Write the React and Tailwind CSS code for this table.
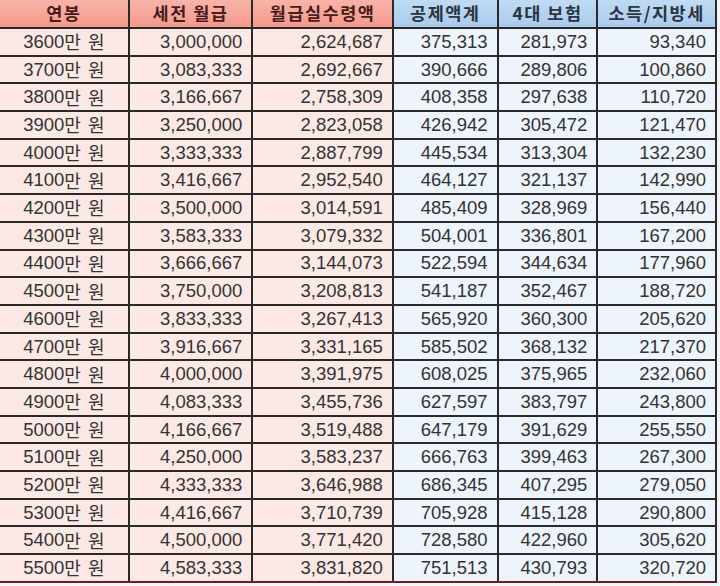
import React from 'react'

const rows = [
  ['3600만 원', '3,000,000', '2,624,687', '375,313', '281,973', '93,340'],
  ['3700만 원', '3,083,333', '2,692,667', '390,666', '289,806', '100,860'],
  ['3800만 원', '3,166,667', '2,758,309', '408,358', '297,638', '110,720'],
  ['3900만 원', '3,250,000', '2,823,058', '426,942', '305,472', '121,470'],
  ['4000만 원', '3,333,333', '2,887,799', '445,534', '313,304', '132,230'],
  ['4100만 원', '3,416,667', '2,952,540', '464,127', '321,137', '142,990'],
  ['4200만 원', '3,500,000', '3,014,591', '485,409', '328,969', '156,440'],
  ['4300만 원', '3,583,333', '3,079,332', '504,001', '336,801', '167,200'],
  ['4400만 원', '3,666,667', '3,144,073', '522,594', '344,634', '177,960'],
  ['4500만 원', '3,750,000', '3,208,813', '541,187', '352,467', '188,720'],
  ['4600만 원', '3,833,333', '3,267,413', '565,920', '360,300', '205,620'],
  ['4700만 원', '3,916,667', '3,331,165', '585,502', '368,132', '217,370'],
  ['4800만 원', '4,000,000', '3,391,975', '608,025', '375,965', '232,060'],
  ['4900만 원', '4,083,333', '3,455,736', '627,597', '383,797', '243,800'],
  ['5000만 원', '4,166,667', '3,519,488', '647,179', '391,629', '255,550'],
  ['5100만 원', '4,250,000', '3,583,237', '666,763', '399,463', '267,300'],
  ['5200만 원', '4,333,333', '3,646,988', '686,345', '407,295', '279,050'],
  ['5300만 원', '4,416,667', '3,710,739', '705,928', '415,128', '290,800'],
  ['5400만 원', '4,500,000', '3,771,420', '728,580', '422,960', '305,620'],
  ['5500만 원', '4,583,333', '3,831,820', '751,513', '430,793', '320,720'],
]

const headers = ['연봉', '세전 월급', '월급실수령액', '공제액계', '4대 보험', '소득/지방세']
const widths = ['w-[128px]', 'w-[124px]', 'w-[141px]', 'w-[105px]', 'w-[100px]', 'w-[119px]']

const App = () => {
  return (
    <div
      className="w-[720px] h-[586px] overflow-hidden bg-[#f3f6f9]"
      style={{ fontFamily: '"Liberation Sans", Arial, "Noto Sans CJK KR", sans-serif' }}
    >
      <div className="w-[717px] border-r-2 border-[#2a2a2a]">
        {/* header */}
        <div className="flex h-[29px] border-b-2 border-[#2a2a2a]">
          {headers.map((h, i) => (
            <div
              key={h}
              className={
                widths[i] +
                ' flex items-center justify-center font-bold text-[17.5px] tracking-[1.5px] border-l-2 first:border-l-0 border-[#2a2a2a] ' +
                (i < 3
                  ? 'bg-gradient-to-b from-[#f8b3a8] to-[#f39a8c] text-[#4a1c1c]'
                  : 'bg-gradient-to-b from-[#c0dbf3] to-[#a9cbec] text-[#2c3440]')
              }
              style={{ fontFamily: '"Noto Sans CJK KR", "Liberation Sans", sans-serif' }}
            >
              {h}
            </div>
          ))}
        </div>
        {/* body */}
        {rows.map((r, ri) => (
          <div
            key={ri}
            className={
              'flex h-[27.7px] border-[#2a2a2a] ' +
              (ri === rows.length - 1 ? 'border-b-2 border-b-[#6b1f1f]' : 'border-b-2')
            }
          >
            {r.map((c, ci) => (
              <div
                key={ci}
                className={
                  widths[ci] +
                  ' flex items-center text-[18.5px] text-[#333] border-l-2 first:border-l-0 border-[#2a2a2a] ' +
                  (ci === 0 ? 'justify-center ' : 'justify-end pr-[9px] ') +
                  (ci < 3 ? 'bg-[#fce9e6]' : 'bg-[#edf4fb]')
                }
              >
                {ci === 0 ? (
                  <span className="flex items-center">
                    {c.slice(0, 4)}
                    <span
                      style={{ fontFamily: '"Noto Sans CJK KR", sans-serif' }}
                      className="text-[18px]"
                    >
                      만
                    </span>
                    <span
                      style={{ fontFamily: '"Noto Sans CJK KR", sans-serif' }}
                      className="text-[18px] ml-[7px]"
                    >
                      원
                    </span>
                  </span>
                ) : (
                  c
                )}
              </div>
            ))}
          </div>
        ))}
      </div>
    </div>
  )
}

export default App
